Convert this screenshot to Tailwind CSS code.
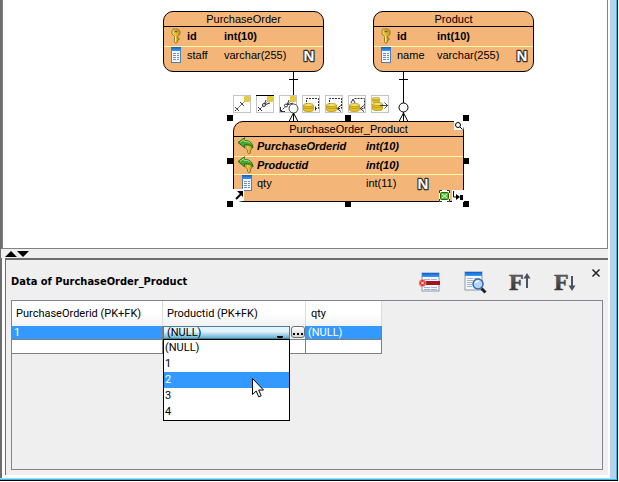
<!DOCTYPE html>
<html lang="en">

<head>
    <meta charset="UTF-8">
    <meta name="viewport" content="width=device-width, initial-scale=1.0">
    <title>Data of PurchaseOrder_Product</title>
    <script src="https://cdn.jsdelivr.net/npm/@tailwindcss/browser@4"></script>
</head>

<body class="bg-white font-['Roboto','Noto_Sans',sans-serif] text-[11px] leading-4 text-black">

    <!-- shared icons -->
    <svg class="absolute size-0">
        <defs>
            <linearGradient id="gold" x1="0" x2="1">
                <stop offset="0" stop-color="#f5e25a" />
                <stop offset="1" stop-color="#c4941a" />
            </linearGradient>
            <linearGradient id="blue" x1="0" x2="0" y1="0" y2="1">
                <stop offset="0" stop-color="#0a5fd0" />
                <stop offset="1" stop-color="#3f9cf5" />
            </linearGradient>
            <linearGradient id="dark" x1="0" x2="0" y1="0" y2="1">
                <stop offset="0" stop-color="#777" />
                <stop offset="1" stop-color="#222" />
            </linearGradient>
            <symbol id="key" viewBox="0 0 12 16">
                <path d="M3 1h5l2 2v3L8 8.500H7.500V10H9v2H7.500v2L6 15.500 4.500 14V8.500L2 6V3z" fill="url(#gold)" stroke="#8a6a1c" stroke-width=".8" />
                <path d="M4.500 3.500h3" stroke="#7a5a14" stroke-width="1.500" />
                <path d="M5.500 8v6" stroke="#fff29a" />
            </symbol>
            <symbol id="column" viewBox="0 0 12 16">
                <rect x="1.500" y=".5" width="9" height="15" fill="#f2f8ff" stroke="#5c7ca8" />
                <rect x="1" y="0" width="10" height="4" fill="url(#blue)" />
                <path d="M3 6.500h3M7 6.500h2M3 8.500h3M7 8.500h2M3 10.500h3M7 10.500h2M3 12.500h3M7 12.500h2" stroke="#6d8fc0" />
            </symbol>
            <symbol id="foreign" viewBox="0 0 18 17">
                <path d="M9 8h4l2 2v2l-1.500 1v3L12 17l-1.500-1.500V13L9 12z" fill="url(#gold)" stroke="#8a6a1c" stroke-width=".8" />
                <path d="M1 5.500 7.500.8v2.700c5 0 8 2 8.500 7.500-2-3-4.500-3.500-8.500-3.200v3z" fill="#45a52d" stroke="#2c6e1c" />
                <path d="M3 5.300 7 2.500v1.800c3 0 5 .5 6.500 2" fill="none" stroke="#a5e283" />
            </symbol>
            <symbol id="nullable" viewBox="0 0 14 16">
                <text x="7" y="13.500" text-anchor="middle" font-family="Liberation Sans" font-weight="bold" font-size="15"
                    fill="#fff" stroke="#333" stroke-width="2.500" stroke-linejoin="round" paint-order="stroke">N</text>
            </symbol>
            <symbol id="db" viewBox="0 0 10 9" preserveAspectRatio="none">
                <path d="M.5 2v5c0 2 9 2 9 0V2" fill="#e8c321" stroke="#a88a18" stroke-width=".7" />
                <ellipse cx="5" cy="2" rx="4.500" ry="1.500" fill="#f9e56c" stroke="#a88a18" stroke-width=".7" />
                <path d="M1 4.500c1 1.300 7 1.300 8 0" fill="none" stroke="#a88a18" stroke-width=".7" />
            </symbol>
        </defs>
    </svg>

    <!-- window frame -->
    <div class="h-screen pr-px pb-px">
        <div class="h-full bg-black pr-px pb-px">
            <div class="h-full bg-[#22c4ea] pr-px pb-px">
                <div class="h-full bg-[#b9d1ea] pr-1.5 pb-px">
                    <div class="flex h-full flex-col border-l-2 border-[#6d6d6d] bg-white pr-0.5 pb-[3px]">

                        <!-- diagram -->
                        <main class="relative h-[249px] shrink-0 overflow-hidden border-r border-b border-l border-[#828282] bg-white font-['Liberation_Sans',sans-serif]">

                            <section class="absolute top-[11px] left-40 h-[61px] w-[161px] rounded-[10px] border border-black bg-[#f4b579]">
                                <h2 class="h-[15px] border-b border-black text-center leading-[14px]">PurchaseOrder</h2>
                                <div class="flex h-5 items-center border-b border-[#ffffa0] pb-0.5 pl-1.5 font-bold">
                                    <svg class="h-4 w-3"><use href="#key" /></svg>
                                    <span class="ml-[5px] w-[37px]">id</span>
                                    <span>int(10)</span>
                                </div>
                                <div class="flex h-[17px] items-center pr-[7px] pb-0.5 pl-1.5">
                                    <svg class="h-4 w-3"><use href="#column" /></svg>
                                    <span class="ml-[5px] w-[37px]">staff</span>
                                    <span>varchar(255)</span>
                                    <svg class="ml-auto h-4 w-3.5"><use href="#nullable" /></svg>
                                </div>
                            </section>

                            <section class="absolute top-[11px] left-[370px] h-[61px] w-[161px] rounded-[10px] border border-black bg-[#f4b579]">
                                <h2 class="h-[15px] border-b border-black text-center leading-[14px]">Product</h2>
                                <div class="flex h-5 items-center border-b border-[#ffffa0] pb-0.5 pl-1.5 font-bold">
                                    <svg class="h-4 w-3"><use href="#key" /></svg>
                                    <span class="ml-[5px] w-10">id</span>
                                    <span>int(10)</span>
                                </div>
                                <div class="flex h-[17px] items-center pr-1 pb-0.5 pl-1.5">
                                    <svg class="h-4 w-3"><use href="#column" /></svg>
                                    <span class="ml-[5px] w-10">name</span>
                                    <span>varchar(255)</span>
                                    <svg class="ml-auto h-4 w-3.5"><use href="#nullable" /></svg>
                                </div>
                            </section>

                            <section class="absolute top-[121px] left-[230px] h-[81px] w-[231px] rounded-[10px] border border-black bg-[#f4b579]">
                                <h2 class="h-[15px] border-b border-black text-center leading-[14px]">PurchaseOrder_Product</h2>
                                <div class="flex h-5 items-center border-b border-[#ffffa0] pb-0.5 pl-[3px] font-bold italic">
                                    <svg class="h-[17px] w-[18px]"><use href="#foreign" /></svg>
                                    <span class="ml-0.5 w-[109px]">PurchaseOrderid</span>
                                    <span>int(10)</span>
                                </div>
                                <div class="flex h-[18px] items-center border-b border-[#ffffa0] pb-0.5 pl-[3px] font-bold italic">
                                    <svg class="h-[17px] w-[18px]"><use href="#foreign" /></svg>
                                    <span class="ml-0.5 w-[109px]">Productid</span>
                                    <span>int(10)</span>
                                </div>
                                <div class="flex h-[17px] items-center pr-[33px] pb-0.5 pl-[7px]">
                                    <svg class="h-4 w-3"><use href="#column" /></svg>
                                    <span class="ml-1 w-[109px]">qty</span>
                                    <span>int(11)</span>
                                    <svg class="ml-auto h-4 w-3.5"><use href="#nullable" /></svg>
                                </div>
                            </section>

                            <!-- resource icons above the selected entity -->
                            <div class="absolute top-[95px] left-[230px] flex gap-[5px]">
                                <svg class="size-[18px]" viewBox="0 0 18 18">
                                    <rect x=".5" y=".5" width="17" height="17" fill="#fff" stroke="#c4c4c4" />
                                    <path d="M2 16 13 5" stroke="#333" stroke-dasharray="2 1" />
                                    <path d="M2 12l4 4M7 7l4 4" stroke="#333" />
                                    <rect x="11" y="1" width="6" height="6" rx="1" fill="#e8c93a" />
                                </svg>
                                <svg class="size-[18px]" viewBox="0 0 18 18">
                                    <rect x=".5" y=".5" width="17" height="17" fill="#fff" stroke="#c4c4c4" />
                                    <path d="M0 .5h18" stroke="#000" />
                                    <path d="M2 16 13 5" stroke="#333" stroke-dasharray="2 1" />
                                    <path d="M2 12l4 4M8 10l2-5M8 10l6-2" stroke="#333" />
                                    <circle cx="8" cy="10" r="1.500" fill="#fff" stroke="#333" />
                                    <rect x="11" y="1" width="6" height="6" rx="1" fill="#e8c93a" />
                                </svg>
                                <svg class="size-[18px]" viewBox="0 0 18 18">
                                    <rect x=".5" y=".5" width="17" height="17" fill="#fff" stroke="#c4c4c4" />
                                    <path d="M2 16 13 5" stroke="#333" stroke-dasharray="2 1" />
                                    <path d="M1.500 12v4.500H6M8 10l2-5M8 10l6-2" fill="none" stroke="#333" />
                                    <circle cx="7" cy="10.500" r="1.500" fill="#fff" stroke="#333" />
                                    <rect x="11" y="1" width="6" height="6" rx="1" fill="#e8c93a" />
                                </svg>
                                <svg class="size-[18px]" viewBox="0 0 18 18">
                                    <rect x=".5" y=".5" width="17" height="17" fill="#fff" stroke="#c4c4c4" />
                                    <path d="M4.500 10V3.500h12v10H12" fill="none" stroke="#333" stroke-dasharray="2 1" />
                                    <path d="M13.500 11.500v4" stroke="#333" />
                                    <use href="#db" x="1" y="8" width="11" height="9" />
                                </svg>
                                <svg class="size-[18px]" viewBox="0 0 18 18">
                                    <rect x=".5" y=".5" width="17" height="17" fill="#fff" stroke="#c4c4c4" />
                                    <path d="M4.500 10V3.500h12v10H12" fill="none" stroke="#333" stroke-dasharray="2 1" />
                                    <path d="M12 13.500l4-3M12 13.500l4 3" stroke="#333" />
                                    <use href="#db" x="1" y="8" width="11" height="9" />
                                </svg>
                                <svg class="size-[18px]" viewBox="0 0 18 18">
                                    <rect x=".5" y=".5" width="17" height="17" fill="#fff" stroke="#c4c4c4" />
                                    <path d="M6.500 3.500h10v10H12" fill="none" stroke="#333" stroke-dasharray="2 1" />
                                    <path d="M3 8l2-4 2 4M12 13.500l4-3M12 13.500l4 3" fill="none" stroke="#333" />
                                    <use href="#db" x="1" y="8" width="11" height="9" />
                                </svg>
                                <svg class="size-[18px]" viewBox="0 0 18 18">
                                    <rect x=".5" y=".5" width="17" height="17" fill="#fff" stroke="#c4c4c4" />
                                    <use href="#db" x="1" y="2" width="8" height="6" />
                                    <use href="#db" x="1" y="7" width="11" height="9" />
                                    <path d="M9 10.500h8M13.500 7.500l3 3-3 3" fill="none" stroke="#444" />
                                </svg>
                            </div>

                            <!-- relationships -->
                            <svg class="absolute top-[72px] left-[280px] h-[50px] w-[130px]" viewBox="0 0 130 50" fill="none" stroke="#000">
                                <path d="M10.500 0v23M6 7.500h9" />
                                <circle cx="10.500" cy="36.500" r="4.500" fill="#fff" fill-opacity=".7" stroke="#444" />
                                <path d="M10.500 41v8M10.500 41l-4.500 8.500M10.500 41l4.500 8.500" />
                                <path d="M120.500 0v31M116 7.500h9" />
                                <circle cx="120.500" cy="35.500" r="4.500" fill="#fff" />
                                <path d="M120.500 40v9M120.500 41l-4.500 8.500M120.500 41l4.500 8.500" />
                            </svg>

                            <!-- selection handles -->
                            <svg class="absolute top-[115px] left-[222px] h-[92px] w-[244px]" viewBox="0 0 244 92">
                                <path d="M2 0h6v6H2zM120 0h6v6h-6zM238 0h6v6h-6z" />
                                <path d="M2 43h6v6H2zM238 43h6v6h-6z" />
                                <path d="M2 86h6v6H2zM120 86h6v6h-6zM238 86h6v6h-6z" />
                            </svg>

                            <svg class="absolute top-[121px] left-[451px] size-[9px]" viewBox="0 0 9 9">
                                <path d="M0 0h9v9H0z" fill="#fff" />
                                <circle cx="4" cy="4" r="2.500" fill="none" stroke="#000" />
                                <path d="M6 6l2.500 2.500" stroke="#000" />
                            </svg>
                            <svg class="absolute top-[189px] left-[230px] size-3" viewBox="0 0 12 12">
                                <path d="M0 0h11v12H0z" fill="#fff" />
                                <path d="M3 10 8 5" stroke="#000" stroke-width="2" />
                                <path d="M4 2h6v6z" />
                            </svg>
                            <svg class="absolute top-[190px] left-[435px] h-3 w-[26px]" viewBox="0 0 26 12">
                                <path d="M1 0h11v12H1zM14 0h12v12H14z" fill="#fff" />
                                <path d="M1.500 3V.5H4M9 .5h2.500V3M1.500 9v2.500H4M9 11.500h2.500V9" fill="none" stroke="#333" />
                                <rect x="2.500" y="2.500" width="8" height="7" rx="1" fill="#5dbb3c" stroke="#1f6b12" />
                                <path d="M4 4l5 4M9 4 4 8" stroke="#d9ffc9" />
                                <path d="M15.500 1v6H20" fill="none" stroke="#000" />
                                <path d="M18 4l4 3-4 3z" />
                                <path d="M22 5h3v5h-3z" />
                            </svg>
                        </main>

                        <!-- splitter -->
                        <div class="-ml-px flex h-[9px] shrink-0 items-center bg-[#efefef] pl-1">
                            <svg class="h-1.5 w-6" viewBox="0 0 24 6">
                                <path d="M0 6 6 0l6 6zM12 0h12l-6 6z" />
                            </svg>
                        </div>

                        <!-- data panel -->
                        <section class="ml-[3px] flex min-h-0 flex-1 flex-col border-t-2 border-l border-[#6d6d6d] bg-[#efefef] px-[5px] pb-[5px]">
                            <header class="flex h-10 shrink-0 items-center">
                                <h1 class="pt-1 font-['DejaVu_Sans_Condensed','DejaVu_Sans',sans-serif] font-bold">Data of PurchaseOrder_Product</h1>
                                <div class="ml-auto flex gap-[21px] pt-1">
                                    <button type="button" aria-label="Delete row" class="size-6">
                                        <svg viewBox="0 0 24 24">
                                            <rect x="4" y="3" width="17" height="18" fill="#f4f8fd" stroke="#8b99aa" />
                                            <path d="M4 3h17v4H4z" fill="url(#blue)" />
                                            <path d="M6 9.500h6M13 9.500h6M6 17.500h6M13 17.500h6M6 19.500h6M13 19.500h6" stroke="#9fb6d6" />
                                            <path d="M6 11h16v4H6z" fill="#a3151a" />
                                            <circle cx="4.500" cy="13" r="3.500" fill="#d9362f" stroke="#f4a6a0" stroke-width=".7" />
                                            <path d="M3 11.500l3 3M6 11.500l-3 3" stroke="#fff" />
                                        </svg>
                                    </button>
                                    <button type="button" aria-label="Find" class="size-6">
                                        <svg viewBox="0 0 24 24">
                                            <rect x="2" y="2" width="17" height="18" fill="#f4f8fd" stroke="#8b99aa" />
                                            <path d="M2 2h17v4H2z" fill="url(#blue)" />
                                            <path d="M4 8.500h6M11 8.500h6M4 10.500h6M4 12.500h5M4 14.500h5M4 16.500h5" stroke="#9fb6d6" />
                                            <path d="M18.500 18.500 22.500 22.500" stroke="#222" stroke-width="3" />
                                            <circle cx="15" cy="14" r="5" fill="#b5d6fb" stroke="#3565b5" stroke-width="1.500" />
                                            <path d="M12.500 13c.5-1.500 2-2 3.500-1.800" fill="none" stroke="#fff" stroke-width="1.500" />
                                        </svg>
                                    </button>
                                    <button type="button" aria-label="Previous font size" class="size-6">
                                        <svg viewBox="0 0 24 24">
                                            <text x="1" y="20" font-family="Liberation Serif" font-weight="bold" font-size="24" fill="url(#dark)" stroke="#444" stroke-width=".5">F</text>
                                            <path d="M19 18V7" stroke="#4b5361" stroke-width="2" />
                                            <path d="M15.500 8.500 19 3l3.500 5.500z" fill="#4b5361" />
                                        </svg>
                                    </button>
                                    <button type="button" aria-label="Next font size" class="size-6">
                                        <svg viewBox="0 0 24 24">
                                            <text x="1" y="20" font-family="Liberation Serif" font-weight="bold" font-size="24" fill="url(#dark)" stroke="#444" stroke-width=".5">F</text>
                                            <path d="M19 6v11" stroke="#4b5361" stroke-width="2" />
                                            <path d="M15.500 15.500 19 21l3.500-5.500z" fill="#4b5361" />
                                        </svg>
                                    </button>
                                </div>
                                <button type="button" aria-label="Close" class="mt-2 mr-0.5 ml-3.5 size-2.5 self-start">
                                    <svg viewBox="0 0 10 10">
                                        <path d="M1.500 1.500l7 7M8.500 1.500l-7 7" stroke="#222" stroke-width="1.500" />
                                    </svg>
                                </button>
                            </header>

                            <div class="relative flex-1 border border-[#84848c]">
                                <table class="w-[370px] table-fixed border-separate border-spacing-0 text-left">
                                    <thead>
                                        <tr class="h-[25px] bg-linear-to-b from-white from-50% to-[#f1f2f4]">
                                            <th class="w-[151px] border-r border-[#dcdcdc] pl-1 font-normal">PurchaseOrderid (PK+FK)</th>
                                            <th class="w-[143px] border-r border-[#dcdcdc] pl-1 font-normal">Productid (PK+FK)</th>
                                            <th class="w-[76px] border-r border-[#dcdcdc] pl-[5px] font-normal">qty</th>
                                        </tr>
                                    </thead>
                                    <tbody class="leading-[13px]">
                                        <tr class="h-3.5 bg-[#3399ff] text-white">
                                            <td class="h-3.5 border-r border-b border-[#808080] p-0 pl-0.5">1</td>
                                            <td class="h-3.5 border-r border-b border-[#808080] bg-[#efefef] p-0">
                                                <div class="flex h-[13px]">
                                                    <select aria-label="Productid" class="h-[13px] w-[127px] appearance-none border border-[#4a7f9c] bg-linear-to-b from-[#e4f3fb] from-40% to-[#5fb1d6] pl-[3px] leading-[11px] text-black">
                                                        <option>(NULL)</option>
                                                        <option>1</option>
                                                        <option>2</option>
                                                        <option>3</option>
                                                        <option>4</option>
                                                    </select>
                                                    <button type="button" aria-label="Browse" class="ml-px flex h-[12px] w-3.5 items-end justify-center rounded-[3px] border border-[#707070] bg-linear-to-b from-white to-[#d4d4d4] pb-0.5">
                                                        <svg class="h-0.5 w-2.5" viewBox="0 0 10 2">
                                                            <path d="M0 0h2v2H0zM4 0h2v2H4zM8 0h2v2H8z" />
                                                        </svg>
                                                    </button>
                                                </div>
                                            </td>
                                            <td class="h-3.5 border-r border-b border-[#808080] p-0 pl-0.5">(NULL)</td>
                                        </tr>
                                        <tr class="h-3.5 bg-white">
                                            <td class="h-3.5 border-r border-b border-[#808080]"></td>
                                            <td class="h-3.5 border-r border-b border-[#808080]"></td>
                                            <td class="h-3.5 border-r border-b border-[#808080]"></td>
                                        </tr>
                                    </tbody>
                                </table>

                                <!-- arrow of the combo, cut off by the row height -->
                                <svg class="absolute top-[35px] left-[265px] h-0.5 w-1.5" viewBox="0 0 6 2"><path d="M0 0h6v1L5 2H1L0 1z" /></svg>

                                <!-- open list -->
                                <ul role="listbox" aria-label="Productid" class="absolute top-[38px] left-[151px] w-[127px] border border-black bg-white">
                                    <li role="option" class="h-4 pl-px">(NULL)</li>
                                    <li role="option" class="h-4 pl-px">1</li>
                                    <li role="option" aria-selected="true" class="h-4 bg-[#3399ff] pl-px text-white">2</li>
                                    <li role="option" class="h-4 pl-px">3</li>
                                    <li role="option" class="h-4 pl-px">4</li>
                                </ul>
                                <svg class="absolute top-[77px] left-60 h-5 w-3" viewBox="0 0 12 20">
                                    <path d="M.5.5v16l3.700-3.500 2.500 5.800 2.500-1L6.700 12h4.800z" fill="#fff" stroke="#000" />
                                </svg>
                            </div>
                        </section>
                    </div>
                </div>
            </div>
        </div>
    </div>
</body>

</html>
